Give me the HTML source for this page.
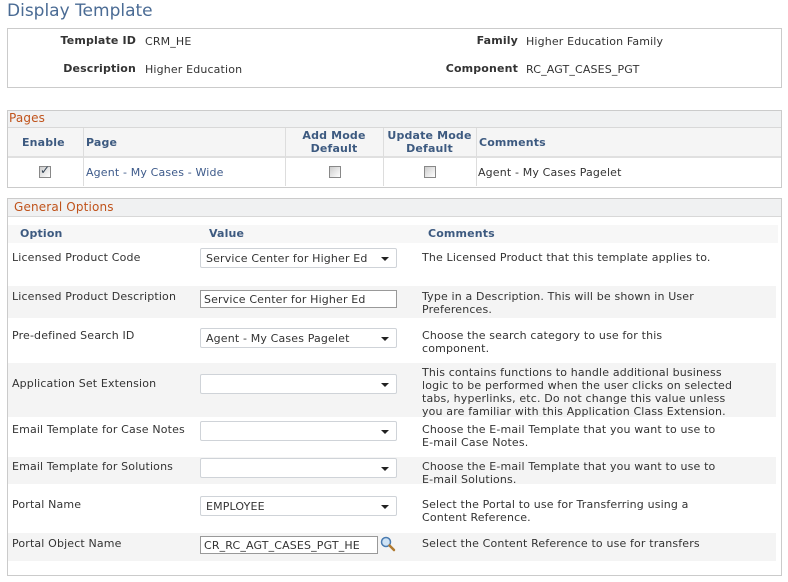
<!DOCTYPE html>
<html><head><style>
*{margin:0;padding:0;box-sizing:border-box}
body{width:788px;height:582px;background:#fff;font-family:"DejaVu Sans",Verdana,sans-serif;font-size:11px;color:#333;position:relative;overflow:hidden;letter-spacing:0.15px}
.a{position:absolute;white-space:nowrap}
.box{position:absolute;border:1px solid #cbcbcb}
.lb{font-weight:bold;color:#333}
.hd{font-weight:bold;color:#3d5a80}
.bar{position:absolute;background:#f0f1f2;border-bottom:1px solid #d8d8d8}
.or{color:#c0531b;font-size:12px}
.sel{position:absolute;height:20px;border:1px solid #cfd3d8;border-radius:2px;background:#fff;padding:3px 5px;font-size:11px;white-space:nowrap}
.sel:after{content:"";position:absolute;right:7px;top:8px;border-left:4px solid transparent;border-right:4px solid transparent;border-top:4px solid #222}
.inp{position:absolute;height:18px;border:1px solid #999;background:#fff;padding:2px 3px;white-space:nowrap;overflow:hidden}
.cb{position:absolute;width:12px;height:12px;border:1px solid #888;background:linear-gradient(135deg,#ccc,#fff)}
.gr{position:absolute;left:8px;width:768px;background:#f4f4f4}
.c{position:absolute;line-height:13px}
.vl{position:absolute;width:1px;background:#ddd}
</style></head><body>
<div class="a" style="left:7px;top:1px;font-size:17px;color:#4a6b94;letter-spacing:0">Display Template</div>
<div class="box" style="left:7px;top:28px;width:775px;height:60px"></div>
<div class="a lb" style="right:652px;top:34px">Template ID</div>
<div class="a" style="left:145px;top:35px">CRM_HE</div>
<div class="a lb" style="right:652px;top:62px">Description</div>
<div class="a" style="left:145px;top:63px">Higher Education</div>
<div class="a lb" style="right:270px;top:34px">Family</div>
<div class="a" style="left:526px;top:35px">Higher Education Family</div>
<div class="a lb" style="right:270px;top:62px">Component</div>
<div class="a" style="left:526px;top:63px">RC_AGT_CASES_PGT</div>

<div class="box" style="left:7px;top:110px;width:775px;height:78px"></div>
<div class="bar" style="left:8px;top:111px;width:773px;height:17px"></div>
<div class="a or" style="left:9px;top:111px">Pages</div>
<div class="a" style="left:8px;top:128px;width:773px;height:30px;background:#f5f5f5;border-bottom:2px solid #e0e0e0"></div>
<div class="vl" style="left:83px;top:128px;height:58px"></div>
<div class="vl" style="left:285px;top:128px;height:58px"></div>
<div class="vl" style="left:383px;top:128px;height:58px"></div>
<div class="vl" style="left:476px;top:128px;height:58px"></div>
<div class="a hd" style="left:22px;top:136px">Enable</div>
<div class="a hd" style="left:86px;top:136px">Page</div>
<div class="a hd" style="left:285px;width:98px;top:129px;text-align:center;line-height:13px">Add Mode<br>Default</div>
<div class="a hd" style="left:383px;width:93px;top:129px;text-align:center;line-height:13px">Update Mode<br>Default</div>
<div class="a hd" style="left:479px;top:136px">Comments</div>
<div class="cb" style="left:39px;top:166px"></div>
<div class="a" style="left:40px;top:163px;font-size:12px;color:#345">✓</div>
<div class="a" style="left:86px;top:166px;color:#3d5a8a">Agent - My Cases - Wide</div>
<div class="cb" style="left:329px;top:166px"></div>
<div class="cb" style="left:424px;top:166px"></div>
<div class="a" style="left:478px;top:166px">Agent - My Cases Pagelet</div>

<div class="box" style="left:7px;top:198px;width:775px;height:378px"></div>
<div class="bar" style="left:8px;top:199px;width:773px;height:18px"></div>
<div class="a or" style="left:14px;top:200px">General Options</div>
<div class="a" style="left:8px;top:225px;width:770px;height:18px;background:#f7f7f7"></div>
<div class="a hd" style="left:20px;top:227px">Option</div>
<div class="a hd" style="left:209px;top:227px">Value</div>
<div class="a hd" style="left:428px;top:227px">Comments</div>

<div class="gr" style="top:286px;height:32px"></div>
<div class="gr" style="top:363px;height:54px"></div>
<div class="gr" style="top:457px;height:27px"></div>
<div class="gr" style="top:533px;height:28px"></div>

<div class="a" style="left:12px;top:251px">Licensed Product Code</div>
<div class="sel" style="left:200px;top:248px;width:197px">Service Center for Higher Ed</div>
<div class="c" style="left:422px;top:251px">The Licensed Product that this template applies to.</div>

<div class="a" style="left:12px;top:290px">Licensed Product Description</div>
<div class="inp" style="left:200px;top:290px;width:197px">Service Center for Higher Ed</div>
<div class="c" style="left:422px;top:290px">Type in a Description. This will be shown in User<br>Preferences.</div>

<div class="a" style="left:12px;top:329px">Pre-defined Search ID</div>
<div class="sel" style="left:200px;top:328px;width:197px">Agent - My Cases Pagelet</div>
<div class="c" style="left:422px;top:329px">Choose the search category to use for this<br>component.</div>

<div class="a" style="left:12px;top:377px">Application Set Extension</div>
<div class="sel" style="left:200px;top:374px;width:197px"></div>
<div class="c" style="left:422px;top:366px">This contains functions to handle additional business<br>logic to be performed when the user clicks on selected<br>tabs, hyperlinks, etc. Do not change this value unless<br>you are familiar with this Application Class Extension.</div>

<div class="a" style="left:12px;top:423px">Email Template for Case Notes</div>
<div class="sel" style="left:200px;top:421px;width:197px"></div>
<div class="c" style="left:422px;top:423px">Choose the E-mail Template that you want to use to<br>E-mail Case Notes.</div>

<div class="a" style="left:12px;top:460px">Email Template for Solutions</div>
<div class="sel" style="left:200px;top:458px;width:197px"></div>
<div class="c" style="left:422px;top:460px">Choose the E-mail Template that you want to use to<br>E-mail Solutions.</div>

<div class="a" style="left:12px;top:498px">Portal Name</div>
<div class="sel" style="left:200px;top:496px;width:197px">EMPLOYEE</div>
<div class="c" style="left:422px;top:498px">Select the Portal to use for Transferring using a<br>Content Reference.</div>

<div class="a" style="left:12px;top:537px">Portal Object Name</div>
<div class="inp" style="left:200px;top:536px;width:178px">CR_RC_AGT_CASES_PGT_HE</div>
<svg class="a" style="left:380px;top:536px" width="16" height="16" viewBox="0 0 16 16"><circle cx="6" cy="6" r="4.5" fill="#cfe3f5" stroke="#4a7bb0" stroke-width="1.5"/><path d="M9.5 9.5 L14 14" stroke="#b07a30" stroke-width="2.5" stroke-linecap="round"/></svg>
<div class="c" style="left:422px;top:537px">Select the Content Reference to use for transfers</div>
</body></html>
